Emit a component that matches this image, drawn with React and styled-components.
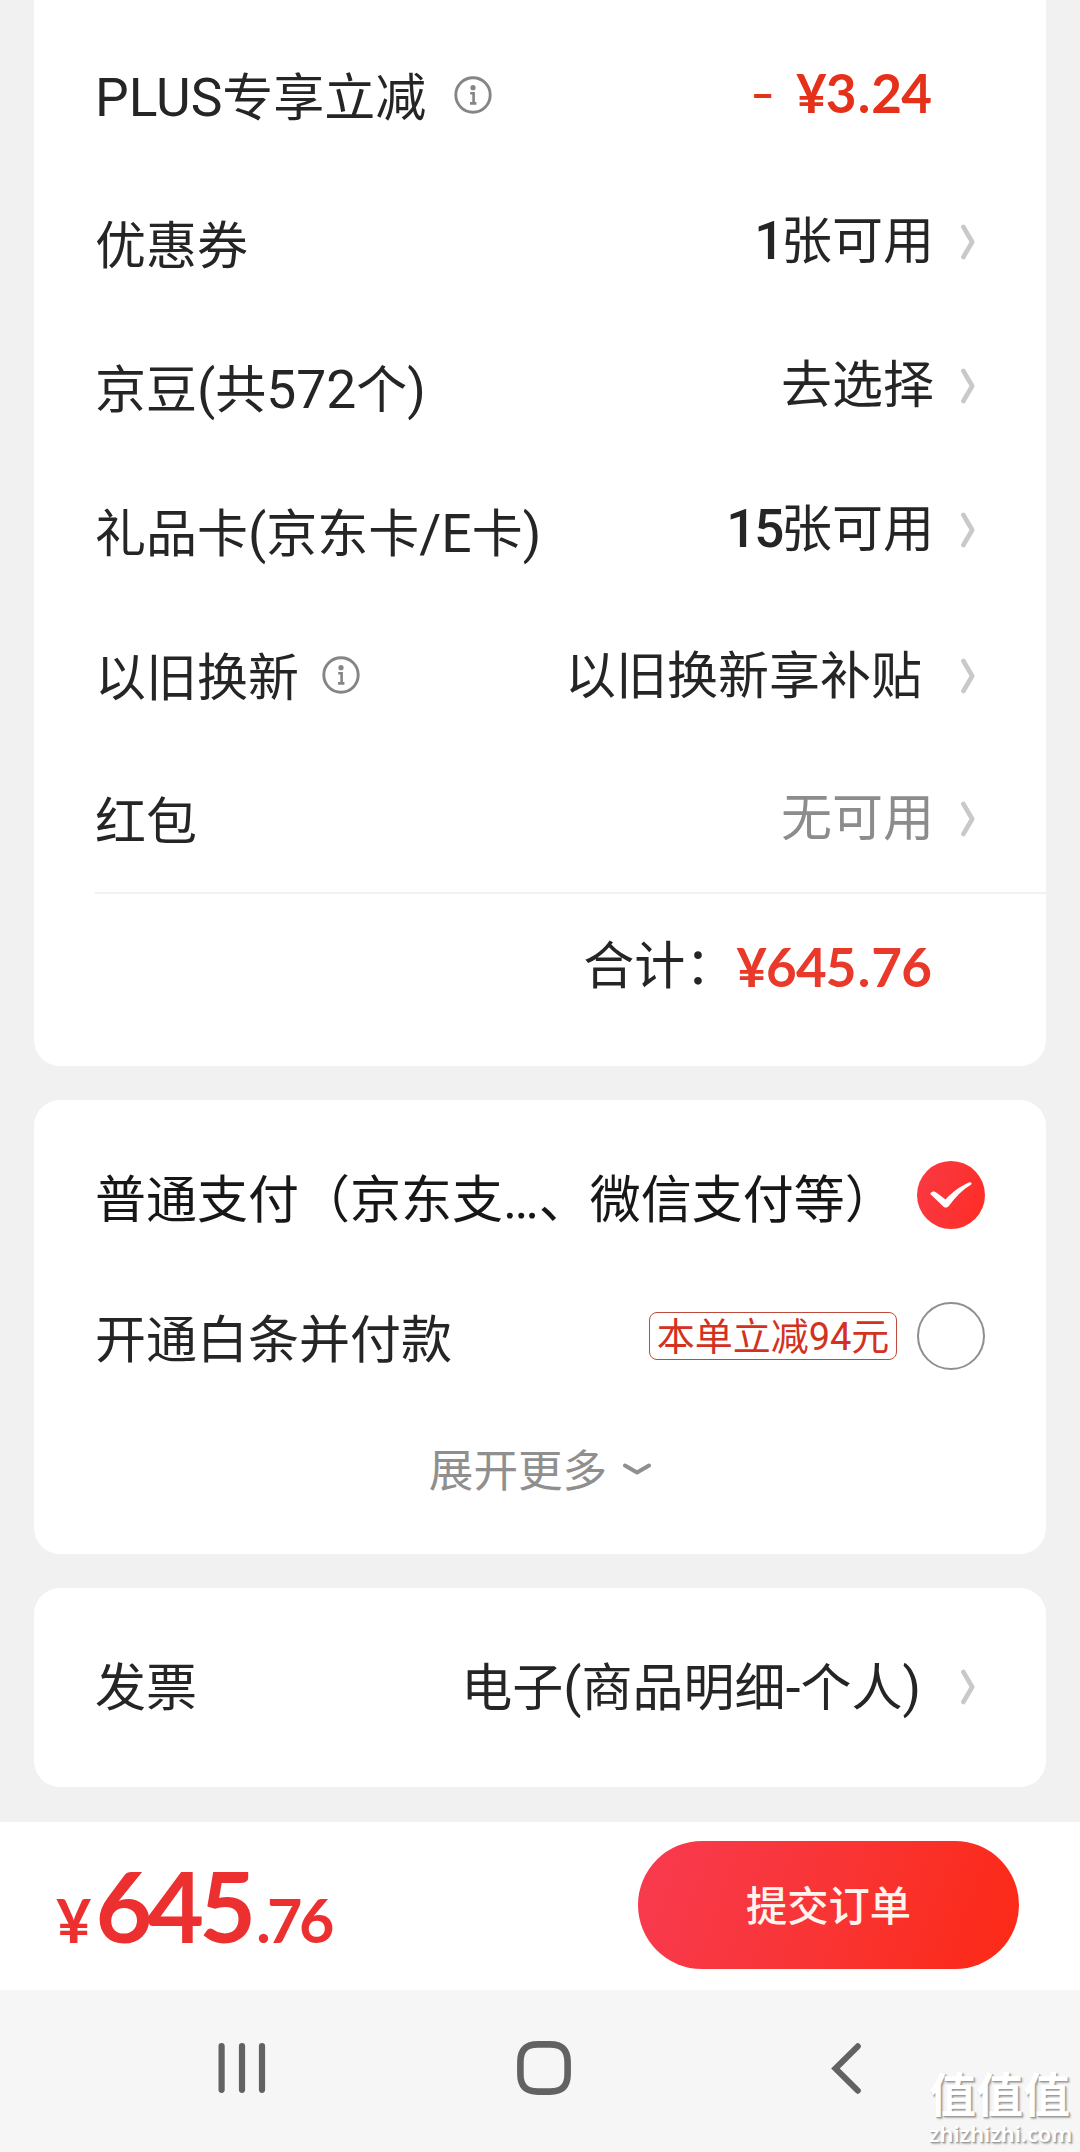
import React from "react";
import styled, { createGlobalStyle, css } from "styled-components";

const GlobalStyle = createGlobalStyle`
  * { box-sizing: border-box; }
  body {
    margin: 0;
    background: #f1f1f1;
    font-family: Roboto, "Noto Sans CJK SC", sans-serif;
    color: #252525;
  }
`;

const Screen = styled.div`
  position: relative;
  width: 1080px;
  height: 2152px;
  overflow: hidden;
  display: flex;
  flex-direction: column;
  background: #f1f1f1;
`;

const Content = styled.main`
  flex: 1;
  display: flex;
  flex-direction: column;
  gap: 34px;
  padding: 0 34px;
`;

const Card = styled.section`
  background: #fff;
  border-radius: ${(p) => (p.$open ? "0 0 26px 26px" : "26px")};
  height: ${(p) => p.$height}px;
  padding: ${(p) => p.$top || 0}px 0 0 61px;
  display: flex;
  flex-direction: column;
`;

const Row = styled.div`
  height: ${(p) => p.$height || 144}px;
  flex: none;
  display: flex;
  align-items: center;
  padding-right: ${(p) => p.$right ?? 71}px;
`;

const Label = styled.span`
  display: flex;
  align-items: center;
  font-size: 51px;
  line-height: 60px;
  white-space: nowrap;
  padding-top: ${(p) => p.$drop ?? 10}px;
  color: ${(p) => p.$color || "#252525"};
`;

const Latin = styled.span`
  font-size: 53.4px;
  line-height: 0;
`;

const Value = styled.span`
  margin-left: auto;
  font-size: 51px;
  line-height: 60px;
  white-space: nowrap;
  color: ${(p) => (p.$muted ? "#8c8c8c" : "#252525")};
  padding-top: ${(p) => p.$drop || 0}px;
  margin-right: ${(p) => p.$gap ?? 27}px;
`;

const Count = styled.span`
  font-weight: 500;
  font-size: 53px;
  line-height: 0;
  letter-spacing: -2px;
  margin-right: -1.5px;
`;

const Price = styled.span`
  font-family: Lato, Roboto, sans-serif;
  font-weight: 700;
  font-size: 53px;
  line-height: 60px;
  letter-spacing: -0.9px;
  white-space: nowrap;
  color: ${(p) => p.$color || "#e5301a"};
  ${(p) => p.$push && css`margin: 0 0 9px auto;`}
`;

const Point = styled.span`
  margin: 0 2px;
`;

const Minus = styled.span`
  font-size: 42px;
  font-weight: 900;
  line-height: 0;
  vertical-align: 4px;
  margin-right: 22px;
`;

const Divider = styled.div`
  height: 2px;
  flex: none;
  margin-top: 5px;
  background: #f1f1f1;
`;

const TotalLabel = styled.span`
  margin-left: auto;
  font-size: 51px;
  line-height: 60px;
`;

const InfoSvg = styled.svg`
  flex: none;
  margin: 0 0 9px ${(p) => p.$gap}px;
`;

const Tag = styled.span`
  margin-left: auto;
  margin-right: 20px;
  width: 248px;
  height: 48px;
  flex: none;
  border: 1px solid #bd4a3a;
  border-radius: 8px;
  display: flex;
  align-items: center;
  justify-content: center;
  font-size: 38px;
  line-height: 46px;
  padding-top: 2px;
  color: #d3321f;
`;

const Radio = styled.span`
  width: 68px;
  height: 68px;
  flex: none;
  border-radius: 50%;
  margin-left: ${(p) => (p.$checked ? "auto" : "0")};
  ${(p) =>
    p.$checked
      ? css`background: linear-gradient(110deg, #f93a45, #fe2c24);`
      : css`border: 2px solid #8f8f8f;`}
`;

const More = styled.div`
  height: 72px;
  margin: 29px 61px 0 0;
  display: flex;
  align-items: center;
  justify-content: center;
  gap: 16px;
  font-size: 44.6px;
  line-height: 60px;
  color: #8f8f8f;
`;

const MoreArrow = styled.svg`
  margin-bottom: 5px;
`;

const SubmitBar = styled.footer`
  height: 168px;
  flex: none;
  background: #fff;
  display: flex;
  align-items: center;
  justify-content: space-between;
  padding: 0 61px 2px 56px;
`;

const Total = styled.div`
  display: flex;
  align-items: baseline;
  padding-top: 14px;
  font-family: Lato, Roboto, sans-serif;
  color: #ec3030;
`;

const Small = styled.span`
  font-size: 61px;
  font-weight: 700;
  line-height: 100px;
  letter-spacing: ${(p) => p.$spacing || 0}px;
`;

const Big = styled.span`
  margin: 0 5px 0 4px;
  font-size: 98px;
  font-weight: 700;
  line-height: 100px;
  letter-spacing: -4.9px;
`;

const Submit = styled.button`
  width: 381px;
  height: 128px;
  border: 0;
  border-radius: 64px;
  padding: 0 0 4px;
  background: linear-gradient(110deg, #f83a4e 5%, #f93434 50%, #fc2a18 95%);
  color: #fff3ee;
  font-family: "Noto Sans CJK SC", sans-serif;
  font-weight: 500;
  font-size: 41.3px;
  line-height: 60px;
`;

const NavBar = styled.nav`
  height: 162px;
  flex: none;
  background: #f6f6f6;
  display: flex;
  align-items: center;
  padding: 0 219px 6px 218px;
  justify-content: space-between;
`;

const HomeIcon = styled.svg`
  margin-right: 10px;
`;

const Watermark = styled.div`
  position: absolute;
  left: 929px;
  top: 2068px;
  width: 144px;
  display: flex;
  flex-direction: column;
  color: #fff;
  text-shadow: 1px 1px 1px #999, 2px 2px 2px #b4b4b4;
  white-space: nowrap;
`;

const MarkName = styled.div`
  font: 700 47px/55px Roboto, "Noto Sans CJK SC", sans-serif;
`;

const MarkSite = styled.div`
  font: 600 21.8px/22px "Noto Sans", sans-serif;
`;

const Mixed = ({ text }) =>
  text
    .split(/([\x20-\x7e…]+)/)
    .filter(Boolean)
    .map((part, i) => (/[\x20-\x7e…]/.test(part) ? <Latin key={i}>{part}</Latin> : part));

const Info = ({ gap }) => (
  <InfoSvg $gap={gap} width="38" height="38" viewBox="0 0 38 38" fill="none">
    <circle cx="19" cy="19" r="17.2" stroke="#858585" strokeWidth="2.9" />
    <circle cx="19" cy="11.7" r="2.6" fill="#858585" />
    <path d="M16.2 17.3H19.6V27.2M16 27.4H22.4" stroke="#858585" strokeWidth="2.6" />
  </InfoSvg>
);

const Chevron = () => (
  <svg width="14" height="36" viewBox="0 0 14 36" fill="none">
    <path d="M2.4 3L11.2 18L2.4 33" stroke="#c9c9c9" strokeWidth="4.6" strokeLinecap="round" strokeLinejoin="round" />
  </svg>
);

const options = [
  { label: "优惠券", count: "1", value: "张可用", height: 144 },
  { label: "京豆(共572个)", value: "去选择", height: 144 },
  { label: "礼品卡(京东卡/E卡)", count: "15", value: "张可用", height: 144 },
  { label: "以旧换新", info: true, value: "以旧换新享补贴", height: 148, gap: 39, drop: 2, labelDrop: 6 },
  { label: "红包", value: "无可用", height: 137, muted: true, labelDrop: 9 },
];

export default function App() {
  return (
    <Screen>
      <GlobalStyle />
      <Content>
        <Card $height={1066} $top={25} $open>
          <Row $height={145} $right={115}>
            <Label $drop={3}>
              <span>
                <Mixed text="PLUS专享立减" />
              </span>
              <Info gap={28} />
            </Label>
            <Price $push>
              <Minus>–</Minus>¥3<Point>.</Point>24
            </Price>
          </Row>
          {options.map((o) => (
            <Row key={o.label} $height={o.height}>
              <Label $drop={o.labelDrop}>
                <span>
                  <Mixed text={o.label} />
                </span>
                {o.info && <Info gap={23} />}
              </Label>
              <Value $muted={o.muted} $gap={o.gap} $drop={o.drop}>
                {o.count && <Count>{o.count}</Count>}
                {o.value}
              </Value>
              <Chevron />
            </Row>
          ))}
          <Divider />
          <Row $height={146} $right={115}>
            <TotalLabel>合计：</TotalLabel>
            <Price $color="#e8392a">
              ¥645<Point>.</Point>76
            </Price>
          </Row>
        </Card>

        <Card $height={454} $top={25}>
          <Row $height={140} $right={61}>
            <Label $color="#171717" $drop={12}>
              <span>
                <Mixed text="普通支付（京东支…、微信支付等）" />
              </span>
            </Label>
            <Radio $checked>
              <svg width="68" height="68" viewBox="0 0 68 68">
                <path
                  d="M14 31.5C16 29.8 18 30.5 20 32L28.5 38.5C36 30.5 43.5 25 52.5 21.3C54 20.8 55.2 22.3 54.2 23.6C45.5 29 38.5 36 32 44.8C30.3 47 27.6 47.2 25.8 45L14 33.8C13.2 33 13.2 32.2 14 31.5Z"
                  fill="#fff"
                />
              </svg>
            </Radio>
          </Row>
          <Row $height={142} $right={61}>
            <Label>开通白条并付款</Label>
            <Tag>本单立减94元</Tag>
            <Radio />
          </Row>
          <More>
            展开更多
            <MoreArrow width="28" height="13" viewBox="0 0 28 13" fill="none">
              <path d="M2 2.5L14 9.5L26 2.5" stroke="#8f8f8f" strokeWidth="4" strokeLinejoin="round" strokeLinecap="round" />
            </MoreArrow>
          </More>
        </Card>

        <Card $height={199} $top={27}>
          <Row $height={144}>
            <Label $drop={4}>发票</Label>
            <Value $gap={40} $drop={4}>
              <Mixed text="电子(商品明细-个人)" />
            </Value>
            <Chevron />
          </Row>
        </Card>
      </Content>

      <SubmitBar>
        <Total>
          <Small>¥</Small>
          <Big>645</Big>
          <Small $spacing={-3.6}>.76</Small>
        </Total>
        <Submit>提交订单</Submit>
      </SubmitBar>

      <NavBar>
        <svg width="48" height="50" viewBox="0 0 48 50" stroke="#626262" strokeWidth="6.2" strokeLinecap="round">
          <path d="M3.6 3.2V46.8M24 3.2V46.8M44 3.2V46.8" />
        </svg>
        <HomeIcon width="54" height="54" viewBox="0 0 54 54" fill="none" stroke="#626262" strokeWidth="6.6">
          <path d="M21 3.4H33C45 3.4 50.6 9 50.6 21V33C50.6 45 45 50.6 33 50.6H21C9 50.6 3.4 45 3.4 33V21C3.4 9 9 3.4 21 3.4Z" />
        </HomeIcon>
        <svg width="30" height="51" viewBox="0 0 30 51" fill="none" stroke="#626262" strokeWidth="6" strokeLinecap="round">
          <path d="M26.8 3.3L4.4 25.5L26.8 47.7" />
        </svg>
      </NavBar>

      <Watermark>
        <MarkName>值值值</MarkName>
        <MarkSite>zhizhizhi.com</MarkSite>
      </Watermark>
    </Screen>
  );
}
